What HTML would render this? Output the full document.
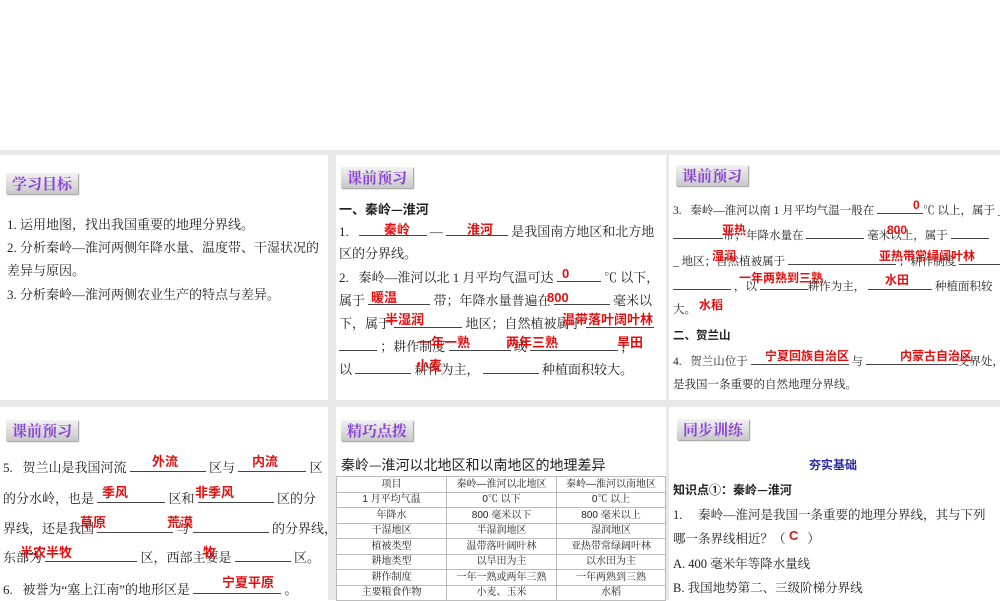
<!DOCTYPE html>
<html><head><meta charset="utf-8"><style>
*{margin:0;padding:0;box-sizing:border-box}
body{width:1000px;height:600px;position:relative;background:#fff;overflow:hidden;font-family:"Liberation Serif","Noto Serif CJK SC",serif;color:#222}
.bg{position:absolute;left:0;top:150px;width:1000px;height:450px;background:#e8e8e8}
.p{position:absolute;background:#fff}
.b{position:absolute;height:21px;padding:0 6px;background:linear-gradient(#f2f2f2,#c8c8c8);box-shadow:1px 1px 1px #999;color:#8a44d6;font-weight:bold;font-size:15px;line-height:21px;letter-spacing:0;font-family:"Noto Serif CJK SC",serif}
.t{position:absolute;font-size:13px;white-space:nowrap;line-height:16px}
.a{position:absolute;font-family:"Liberation Sans","Noto Sans CJK SC",sans-serif;font-weight:bold;color:#e01010;font-size:13px;white-space:nowrap;line-height:16px}
.u{display:inline-block;border-bottom:1px solid #444;height:13px;vertical-align:baseline}
.h{font-weight:bold;font-family:"Noto Sans CJK SC",sans-serif}
table{position:absolute;left:336px;top:476px;width:330px;border-collapse:collapse;font-size:10px;font-family:"Liberation Sans","Noto Serif CJK SC",serif}
td{border:1px solid #bbb;height:15.5px;text-align:center;padding:0;line-height:13px}
.s{font-size:11.5px}
</style></head><body>
<div class="bg"></div>
<div class="p" style="left:0;top:155px;width:328px;height:245px"></div>
<div class="p" style="left:336px;top:155px;width:330px;height:245px"></div>
<div class="p" style="left:669px;top:155px;width:331px;height:245px"></div>
<div class="p" style="left:0;top:407px;width:328px;height:193px"></div>
<div class="p" style="left:336px;top:407px;width:330px;height:193px"></div>
<div class="p" style="left:669px;top:407px;width:331px;height:193px"></div>

<!-- panel 1 -->
<div class="b" style="left:6px;top:173px">学习目标</div>
<div class="t" style="left:7px;top:217px">1. 运用地图，找出我国重要的地理分界线。</div>
<div class="t" style="left:7px;top:240px">2. 分析秦岭—淮河两侧年降水量、温度带、干湿状况的</div>
<div class="t" style="left:7px;top:263px">差异与原因。</div>
<div class="t" style="left:7px;top:287px">3. 分析秦岭—淮河两侧农业生产的特点与差异。</div>

<!-- panel 2 -->
<div class="b" style="left:341px;top:167px">课前预习</div>
<div class="t h" style="left:339px;top:201px">一、秦岭—淮河</div>
<div class="t" style="left:339px;top:223px">1.&nbsp;&nbsp; <span class="u" style="width:68px"></span> — <span class="u" style="width:62px"></span> 是我国南方地区和北方地</div>
<div class="t" style="left:339px;top:246px">区的分界线。</div>
<div class="t" style="left:339px;top:269px">2.&nbsp;&nbsp; 秦岭—淮河以北 1 月平均气温可达 <span class="u" style="width:44px"></span> ℃ 以下，</div>
<div class="t" style="left:339px;top:292px">属于 <span class="u" style="width:62px"></span> 带；年降水量普遍在 <span class="u" style="width:56px"></span> 毫米以</div>
<div class="t" style="left:339px;top:315px">下，属于 <span class="u" style="width:68px"></span> 地区；自然植被属于 <span class="u" style="width:68px"></span></div>
<div class="t" style="left:339px;top:338px"><span class="u" style="width:38px"></span> ；耕作制度 <span class="u" style="width:62px"></span> 或 <span class="u" style="width:88px"></span> ，</div>
<div class="t" style="left:339px;top:361px">以 <span class="u" style="width:56px"></span> 耕作为主， <span class="u" style="width:56px"></span> 种植面积较大。</div>
<div class="a" style="left:384px;top:222px">秦岭</div>
<div class="a" style="left:467px;top:222px">淮河</div>
<div class="a" style="left:562px;top:266px">0</div>
<div class="a" style="left:371px;top:290px">暖温</div>
<div class="a" style="left:547px;top:290px">800</div>
<div class="a" style="left:385px;top:312px">半湿润</div>
<div class="a" style="left:562px;top:312px">温带落叶阔叶林</div>
<div class="a" style="left:418px;top:335px">一年一熟</div>
<div class="a" style="left:506px;top:335px">两年三熟</div>
<div class="a" style="left:617px;top:335px">旱田</div>
<div class="a" style="left:416px;top:358px">小麦</div>

<!-- panel 3 -->
<div class="b" style="left:676px;top:165px">课前预习</div>
<div class="t s" style="left:673px;top:201px">3.&nbsp;&nbsp; 秦岭—淮河以南 1 月平均气温一般在 <span class="u" style="width:46px"></span>℃ 以上，属于 _</div>
<div class="t s" style="left:673px;top:226px"><span class="u" style="width:50px"></span>带；年降水量在 <span class="u" style="width:58px"></span> 毫米以上，属于 <span class="u" style="width:38px"></span></div>
<div class="t s" style="left:673px;top:252px">_ 地区；自然植被属于 <span class="u" style="width:108px"></span> ；耕作制度 <span class="u" style="width:42px"></span></div>
<div class="t s" style="left:673px;top:277px"><span class="u" style="width:58px"></span> ，以 <span class="u" style="width:48px"></span>耕作为主， <span class="u" style="width:64px"></span> 种植面积较</div>
<div class="t s" style="left:673px;top:302px">大。</div>
<div class="t h s" style="left:673px;top:327px">二、贺兰山</div>
<div class="t s" style="left:673px;top:352px">4.&nbsp;&nbsp; 贺兰山位于 <span class="u" style="width:98px"></span> 与 <span class="u" style="width:92px"></span>交界处，</div>
<div class="t s" style="left:673px;top:377px">是我国一条重要的自然地理分界线。</div>
<div class="a" style="left:913px;top:197px;font-size:12px">0</div>
<div class="a" style="left:722px;top:222px;font-size:12px">亚热</div>
<div class="a" style="left:887px;top:222px;font-size:12px">800</div>
<div class="a" style="left:712px;top:248px;font-size:12px">湿润</div>
<div class="a" style="left:879px;top:248px;font-size:12px">亚热带常绿阔叶林</div>
<div class="a" style="left:739px;top:270px;font-size:12px">一年两熟到三熟</div>
<div class="a" style="left:885px;top:272px;font-size:12px">水田</div>
<div class="a" style="left:699px;top:297px;font-size:12px">水稻</div>
<div class="a" style="left:765px;top:348px;font-size:12px">宁夏回族自治区</div>
<div class="a" style="left:900px;top:348px;font-size:12px">内蒙古自治区</div>

<!-- panel 4 -->
<div class="b" style="left:6px;top:420px">课前预习</div>
<div class="t" style="left:3px;top:459px">5.&nbsp;&nbsp; 贺兰山是我国河流 <span class="u" style="width:76px"></span> 区与 <span class="u" style="width:68px"></span> 区</div>
<div class="t" style="left:3px;top:490px">的分水岭，也是 <span class="u" style="width:68px"></span> 区和 <span class="u" style="width:76px"></span> 区的分</div>
<div class="t" style="left:3px;top:520px">界线，还是我国 <span class="u" style="width:76px"></span> 与 <span class="u" style="width:76px"></span> 的分界线，</div>
<div class="t" style="left:3px;top:549px">东部为 <span class="u" style="width:92px"></span> 区，西部主要是 <span class="u" style="width:56px"></span> 区。</div>
<div class="t" style="left:3px;top:581px">6.&nbsp;&nbsp; 被誉为“塞上江南”的地形区是 <span class="u" style="width:88px"></span> 。</div>
<div class="a" style="left:152px;top:454px">外流</div>
<div class="a" style="left:252px;top:454px">内流</div>
<div class="a" style="left:102px;top:485px">季风</div>
<div class="a" style="left:195px;top:485px">非季风</div>
<div class="a" style="left:80px;top:515px">草原</div>
<div class="a" style="left:167px;top:515px">荒漠</div>
<div class="a" style="left:20px;top:545px">半农半牧</div>
<div class="a" style="left:203px;top:545px">牧</div>
<div class="a" style="left:222px;top:575px">宁夏平原</div>

<!-- panel 5 -->
<div class="b" style="left:341px;top:420px">精巧点拨</div>
<div class="t" style="left:341px;top:457px;font-size:14px;font-family:'Noto Sans CJK SC',sans-serif">秦岭—淮河以北地区和以南地区的地理差异</div>
<table>
<tr><td style="width:110px">项目</td><td style="width:110px">秦岭—淮河以北地区</td><td>秦岭—淮河以南地区</td></tr>
<tr><td>1 月平均气温</td><td>0℃ 以下</td><td>0℃ 以上</td></tr>
<tr><td>年降水</td><td>800 毫米以下</td><td>800 毫米以上</td></tr>
<tr><td>干湿地区</td><td>半湿润地区</td><td>湿润地区</td></tr>
<tr><td>植被类型</td><td>温带落叶阔叶林</td><td>亚热带常绿阔叶林</td></tr>
<tr><td>耕地类型</td><td>以旱田为主</td><td>以水田为主</td></tr>
<tr><td>耕作制度</td><td>一年一熟或两年三熟</td><td>一年两熟到三熟</td></tr>
<tr><td>主要粮食作物</td><td>小麦、玉米</td><td>水稻</td></tr>
</table>

<!-- panel 6 -->
<div class="b" style="left:677px;top:419px">同步训练</div>
<div class="t h" style="left:809px;top:457px;color:#2a2aa0;font-size:12px">夯实基础</div>
<div class="t h" style="left:673px;top:482px;font-size:12px">知识点①：秦岭—淮河</div>
<div class="t" style="left:673px;top:507px;font-size:12.5px">1.&nbsp;&nbsp;&nbsp;&nbsp; 秦岭—淮河是我国一条重要的地理分界线，其与下列</div>
<div class="t" style="left:673px;top:531px;font-size:12.5px">哪一条界线相近？（&nbsp;&nbsp;&nbsp;&nbsp;&nbsp;&nbsp; ）</div>
<div class="a" style="left:789px;top:528px">C</div>
<div class="t" style="left:673px;top:556px;font-size:12.5px">A. 400 毫米年等降水量线</div>
<div class="t" style="left:673px;top:580px;font-size:12.5px">B. 我国地势第二、三级阶梯分界线</div>
</body></html>
